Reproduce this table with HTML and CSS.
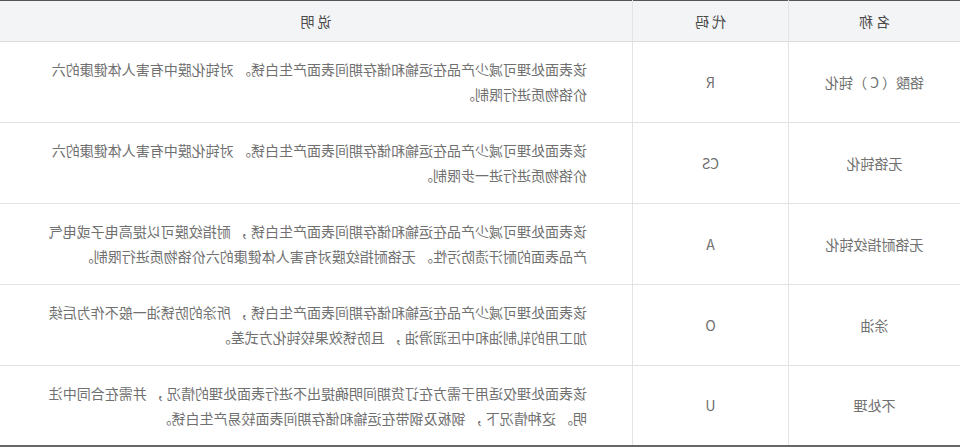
FILE: index.html
```html
<!DOCTYPE html>
<html lang="zh-CN">
<head>
<meta charset="utf-8">
<link rel="stylesheet" href="styles.css">
</head>
<body>
<div class="mirror">
<table class="spec">
  <thead>
    <tr>
      <th class="c-name">名 称</th>
      <th class="c-code">代 码</th>
      <th class="c-desc">说 明</th>
    </tr>
  </thead>
  <tbody>
    <tr>
      <td class="c-name">铬酸（ C ）钝化</td>
      <td class="c-code">R</td>
      <td class="c-desc">该表面处理可减少产品在运输和储存期间表面产生白锈。 对钝化膜中有害人体健康的六价铬物质进行限制。</td>
    </tr>
    <tr>
      <td class="c-name">无铬钝化</td>
      <td class="c-code">CS</td>
      <td class="c-desc">该表面处理可减少产品在运输和储存期间表面产生白锈。 对钝化膜中有害人体健康的六价铬物质进行进一步限制。</td>
    </tr>
    <tr>
      <td class="c-name">无铬耐指纹钝化</td>
      <td class="c-code">A</td>
      <td class="c-desc">该表面处理可减少产品在运输和储存期间表面产生白锈 ， 耐指纹膜可以提高电子或电气产品表面的耐汗渍防污性。 无铬耐指纹膜对有害人体健康的六价铬物质进行限制。</td>
    </tr>
    <tr>
      <td class="c-name">涂油</td>
      <td class="c-code">O</td>
      <td class="c-desc">该表面处理可减少产品在运输和储存期间表面产生白锈 ， 所涂的防锈油一般不作为后续加工用的轧制油和中压润滑油 ， 且防锈效果较钝化方式差。</td>
    </tr>
    <tr>
      <td class="c-name">不处理</td>
      <td class="c-code">U</td>
      <td class="c-desc">该表面处理仅适用于需方在订货期间明确提出不进行表面处理的情况 ， 并需在合同中注明。 这种情况下 ， 钢板及钢带在运输和储存期间表面较易产生白锈。</td>
    </tr>
  </tbody>
</table>
</div>
</body>
</html>
```

FILE: styles.css
```css
html, body {
  margin: 0;
  padding: 0;
  background: #ffffff;
}

.mirror {
  width: 960px;
  transform: scaleX(-1);
}

.spec {
  width: 960px;
  border-collapse: collapse;
  table-layout: fixed;
  font-family: "Noto Sans CJK SC", "Noto Sans", sans-serif;
  font-size: 14px;
  color: #707070;
  border-top: 1px solid #555555;
  border-bottom: 2px solid #666666;
}

.spec th {
  height: 40px;
  padding: 0;
  background: #f3f4f5;
  color: #4a4a4a;
  font-weight: normal;
  text-align: center;
  border-bottom: 1px solid #dcdcdc;
  border-right: 1px solid #e3e3e3;
}

.spec td {
  height: 80px;
  padding: 0;
  text-align: center;
  vertical-align: middle;
  border-bottom: 1px solid #e3e3e3;
  border-right: 1px solid #e3e3e3;
  line-height: 25px;
}

.spec tbody tr:last-child td {
  height: 79px;
  border-bottom: none;
}

.spec .c-name { width: 171px; }
.spec .c-code { width: 155px; }

.spec th.c-desc,
.spec td.c-desc {
  border-right: none;
}

.spec td.c-desc {
  text-align: left;
  padding: 0 40px 0 45px;
}
```
